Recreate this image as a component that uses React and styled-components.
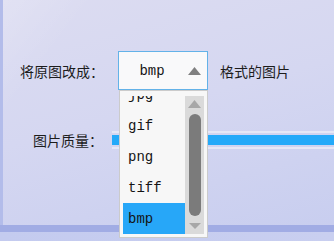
import React from 'react';
import styled, { createGlobalStyle } from 'styled-components';

const GlobalStyle = createGlobalStyle`
  html, body {
    margin: 0;
    padding: 0;
    background: #d6d8f0;
  }
`;

const Window = styled.div`
  width: 334px;
  height: 241px;
  overflow: hidden;
  display: flex;
  flex-direction: column;
  font-family: "Noto Sans CJK SC", "Noto Sans", sans-serif;
  background:
    linear-gradient(128deg, rgba(255, 255, 255, 0.18) 0%, rgba(255, 255, 255, 0) 18%),
    linear-gradient(165deg, #dcdcf1 0%, #d5d7f1 45%, #c7cdef 100%);
`;

const Main = styled.div`
  height: 225px;
  box-sizing: border-box;
  border-left: 3px solid #b3bcea;
  padding-top: 51px;
  display: flex;
  flex-direction: column;
`;

const Row = styled.div`
  display: flex;
  align-items: center;
  padding-left: ${({ indent }) => indent}px;
  margin-top: ${({ gap }) => gap || 0}px;
  height: ${({ h }) => h}px;
`;

const Label = styled.span`
  font-size: 14px;
  line-height: 18px;
  color: #1c1c1c;
  white-space: nowrap;
  margin-right: ${({ mr }) => mr || 0}px;
  margin-left: ${({ ml }) => ml || 0}px;
`;

const ComboWrap = styled.div`
  position: relative;
  width: 90px;
  height: 39px;
  z-index: 2;
`;

const Combo = styled.div`
  box-sizing: border-box;
  width: 100%;
  height: 100%;
  border: 1px solid #63b2e8;
  background: #f9f9fa;
  display: flex;
  align-items: center;
`;

const ComboText = styled.span`
  flex: 1;
  text-align: center;
  font-family: "Liberation Mono", "Courier New", monospace;
  font-size: 14px;
  color: #151515;
  padding-left: 2px;
`;

const ArrowBox = styled.div`
  width: 22px;
  display: flex;
  justify-content: center;
  padding-right: 2px;
`;

const Dropdown = styled.div`
  position: absolute;
  top: 100%;
  left: 1px;
  right: 0;
  height: 148px;
  box-sizing: border-box;
  border: 1px solid #cbcbcb;
  background: #f7f7f7;
  padding: 5px 3px 3px 3px;
  display: flex;
`;

const Items = styled.div`
  flex: 1;
  overflow: hidden;
`;

const ItemsInner = styled.div`
  margin-top: -17px;
  display: flex;
  flex-direction: column;
`;

const Item = styled.div`
  height: 31px;
  display: flex;
  align-items: center;
  padding-left: 5px;
  font-family: "Liberation Mono", "Courier New", monospace;
  font-size: 14px;
  color: #141414;
  background: ${({ selected }) => (selected ? '#27a7f8' : 'transparent')};
`;

const Scrollbar = styled.div`
  width: 19px;
  background: #dadada;
  display: flex;
  flex-direction: column;
  align-items: center;
`;

const ScrollArrow = styled.div`
  height: ${({ h }) => h}px;
  display: flex;
  align-items: center;
  justify-content: center;
`;

const Thumb = styled.div`
  width: 12px;
  flex: 1;
  border-radius: 6px;
  background: #7b7b7b;
  margin: 2px 0;
`;

const Slider = styled.div`
  flex: 1;
  margin-left: 9px;
  box-sizing: border-box;
  height: 18px;
  border-top: 2px solid #e6e7f6;
  border-bottom: 2px solid #e6e7f6;
  padding: 2px 0;
`;

const SliderFill = styled.div`
  height: 10px;
  background: #24a9f9;
`;

const Band = styled.div`
  height: 7px;
  background: #a1acE4;
`;

const Footer = styled.div`
  flex: 1;
  background: linear-gradient(90deg, #c4cbef 0%, #c9cff0 100%);
`;

const Triangle = ({ up = true, w = 13, h = 8, color = '#808080' }) => (
  <svg width={w} height={h} viewBox={`0 0 ${w} ${h}`}>
    <polygon
      points={up ? `0,${h} ${w / 2},0 ${w},${h}` : `0,0 ${w},0 ${w / 2},${h}`}
      fill={color}
    />
  </svg>
);

const formats = ['jpg', 'gif', 'png', 'tiff', 'bmp'];

const App = () => {
  const selected = 'bmp';
  return (
    <>
      <GlobalStyle />
      <Window>
        <Main>
          <Row indent={17} h={39}>
            <Label mr={14}>将原图改成：</Label>
            <ComboWrap>
              <Combo>
                <ComboText>{selected}</ComboText>
                <ArrowBox>
                  <Triangle />
                </ArrowBox>
              </Combo>
              <Dropdown>
                <Items>
                  <ItemsInner>
                    {formats.map((f) => (
                      <Item key={f} selected={f === selected}>
                        {f}
                      </Item>
                    ))}
                  </ItemsInner>
                </Items>
                <Scrollbar>
                  <ScrollArrow h={16}>
                    <Triangle color="#a7a7a7" />
                  </ScrollArrow>
                  <Thumb />
                  <ScrollArrow h={16}>
                    <Triangle up={false} w={12} h={6} color="#a7a7a7" />
                  </ScrollArrow>
                </Scrollbar>
              </Dropdown>
            </ComboWrap>
            <Label ml={12}>格式的图片</Label>
          </Row>
          <Row indent={30} h={18} gap={41}>
            <Label>图片质量：</Label>
            <Slider>
              <SliderFill />
            </Slider>
          </Row>
        </Main>
        <Band />
        <Footer />
      </Window>
    </>
  );
};

export default App;
